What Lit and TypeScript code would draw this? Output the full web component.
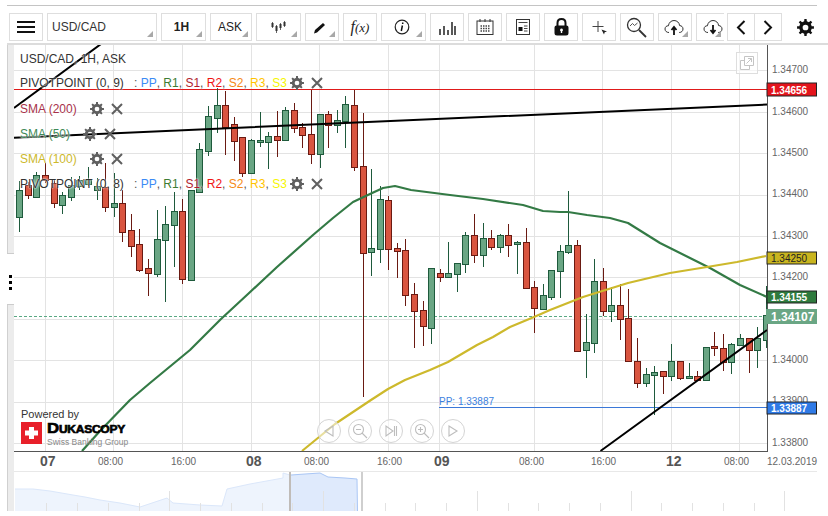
import { LitElement, html, css, svg } from "lit";
import { customElement } from "lit/decorators.js";

type C = [string, number, number, number, number];
// kind, bodyTop, bodyBottom, wickTop, wickBottom
const CANDLES: C[] = [
  ["g",190,217,181,232],["r",185,195,182,199],["g",175,197,172,198],["r",175,180,163,183],["r",183,203,180,208],
  ["g",195,205,192,214],["g",185,197,177,201],["g",180,186,176,190],["g",180,184,167,186],["g",186,190,178,200],
  ["r",187,207,163,212],["g",203,207,173,217],["r",203,232,190,242],["r",230,246,214,257],["r",244,270,229,272],
  ["r",268,273,259,296],["g",239,274,210,277],["g",224,240,206,302],["g",211,225,192,267],["r",211,279,199,284],
  ["g",190,280,190,281],["g",149,192,143,192],["g",116,151,106,156],["g",105,118,88,133],["r",105,127,91,155],
  ["r",124,141,117,161],["r",137,173,137,177],["g",140,173,139,173],["g",140,142,112,147],["g",136,142,132,169],
  ["r",136,140,111,157],["g",110,140,107,140],["r",110,128,103,133],["r",127,135,123,148],["r",134,154,90,164],
  ["g",114,154,114,168],["r",114,125,111,148],["g",120,125,110,133],["g",104,121,96,148],["r",105,167,90,171],
  ["r",166,253,113,397],["g",248,252,169,276],["g",199,249,186,263],["r",200,249,196,270],["r",248,251,243,278],
  ["r",250,295,239,306],["r",294,311,283,348],["r",310,326,301,346],["g",268,328,268,344],["r",273,277,269,282],
  ["g",273,277,242,278],["g",263,274,263,292],["g",235,264,232,273],["r",235,255,214,263],["g",238,255,223,267],
  ["r",238,247,230,250],["g",235,247,234,253],["r",235,245,224,257],["g",242,244,241,274],["r",242,288,228,288],
  ["r",287,308,281,333],["g",295,309,284,309],["g",270,297,270,300],["g",251,271,245,298],["g",245,252,191,254],
  ["r",245,351,240,352],["g",342,350,314,378],["g",281,343,259,353],["r",281,311,268,316],["g",305,311,287,322],
  ["r",305,319,284,340],["r",318,361,289,361],["r",361,383,338,388],["g",374,383,368,387],["g",372,375,366,415],
  ["r",371,376,371,394],["g",361,376,344,381],["r",361,378,361,380],["g",376,378,363,379],["r",376,380,371,380],
  ["g",347,380,347,380],["r",346,348,332,356],["r",348,362,334,371],["g",344,362,343,374],["g",338,345,334,345],
  ["r",338,350,338,373],["g",338,350,327,368],["g",315,340,286,348],
];

const GRID_Y = [70,112,153,195,236,277,319,360,402,443];
const GRID_X = [45,113,182,251,319,388,439,534,602,671,739];
const PRICES: [string, number][] = [
  ["1.34700",73],["1.34600",115],["1.34500",156],["1.34400",197],["1.34300",239],["1.34200",280],["1.34000",363],["1.33900",404],["1.33800",446],
];
const SMA50 = "82,451 100,431 130,400 150,383 190,350 221,319 248,294 277,267 313,235 333,218 353,202 370,194 383,188 395,186 411,190 450,195 483,199 523,205 543,211 560,212 568,212 587,215 610,218 628,223 660,243 690,258 710,268 740,285 767,297";
const SMA100 = "302,451 335,424 371,400 388,389 405,380 430,370 448,362 477,345 493,337 510,327 534,317 550,310 583,297 628,283 670,273 707,267 737,262 766,256";
const NAV_AREA = "15,511 15,489 33,489 50,491 73,495 85,497 100,500 120,503 140,507 155,502 167,498 173,503 200,505 222,506 227,489 250,484 283,478 283,473 290,475 290,511";

const TAGS: [string, number, number, string, string, string, string][] = [
  ["1.34656",83,13,"#e4141c","#222","#fff","bold 10px"],
  ["1.34250",252,12,"#c9b51f","#222","#222","10px"],
  ["1.34155",291,12,"#2f7a3e","#222","#fff","bold 10px"],
  ["1.33887",402,12,"#2f7ae6","#222","#fff","bold 10px"],
];

function gearPath(cx: number, cy: number, R: number, r: number, hole: number, teeth = 8) {
  let d = "";
  const step = (Math.PI * 2) / teeth;
  for (let i = 0; i < teeth; i++) {
    const a = i * step;
    const pts: [number, number][] = [
      [r, a - step * 0.5], [r, a - step * 0.27], [R, a - step * 0.17], [R, a + step * 0.17], [r, a + step * 0.27],
    ];
    pts.forEach(([rad, t], j) => {
      d += `${i === 0 && j === 0 ? "M" : "L"}${(cx + rad * Math.cos(t)).toFixed(2)} ${(cy + rad * Math.sin(t)).toFixed(2)}`;
    });
  }
  d += "Z";
  d += `M${cx + hole} ${cy}A${hole} ${hole} 0 1 0 ${cx - hole} ${cy}A${hole} ${hole} 0 1 0 ${cx + hole} ${cy}Z`;
  return d;
}

const gearIcon = (cls: string, s: number) => html`<svg class=${cls} width=${s} height=${s} viewBox="0 0 16 16"><path fill-rule="evenodd" d=${gearPath(8, 8, 8, 5.9, 2.7)}/></svg>`;
const closeIcon = html`<svg class="x" width="12" height="12" viewBox="0 0 12 12"><path d="M1 1L11 11M11 1L1 11"/></svg>`;

@customElement("app-root")
export class AppRoot extends LitElement {
  static styles = css`
    :host { display: block; width: 828px; height: 516px; background: #fff; overflow: hidden; font-family: "Liberation Sans", Arial, sans-serif; color: #333; }
    .rule { height: 1px; margin: 5px 11px 0 7px; background: #c4c4c4; }
    .toolbar { display: flex; gap: 4px; height: 28px; margin-top: 7px; padding-left: 9px; align-items: stretch; }
    .btn { position: relative; box-sizing: border-box; width: 34px; border: 1px solid #dedede; display: flex; align-items: center; justify-content: center; font-size: 12px; color: #222; }
    .btn svg { display: block; }
    .btn.sym { width: 110px; justify-content: flex-start; padding-left: 4px; font-size: 12px; color: #333; }
    .btn.w45 { width: 45px; }
    .btn.w42 { width: 42px; }
    .btn.tf { font-weight: bold; color: #222; padding-right: 4px; }
    .btn.ask { padding-right: 2px; }
    .btn.clip { width: 28px; border-right: none; justify-content: flex-start; padding-left: 6px; }
    .btn.nav { width: 55px; margin-left: -1px; padding: 0; }
    .btn.nav > div { flex: 1; height: 100%; display: flex; align-items: center; justify-content: center; }
    .btn.nav > div + div { border-left: 1px solid #dedede; }
    .settings { width: 38px; display: flex; align-items: center; justify-content: center; }
    .corner { position: absolute; right: 3px; bottom: 3px; width: 0; height: 0; border-left: 6px solid transparent; border-bottom: 6px solid #a8a8a8; }
    .fx { font-family: "Liberation Serif", serif; font-style: italic; font-size: 13px; color: #222; }
    .fx b { font-size: 16px; font-weight: normal; }
    .sep { height: 2px; margin: 2px 0 0 7px; background: #dcdcdc; }
    .main { display: flex; margin-left: 7px; height: 466px; }
    .gutter { box-sizing: border-box; width: 7px; background: #ececec; border-left: 1px solid #d0d0d0; display: flex; flex-direction: column; padding-top: 208px; }
    .grip { box-sizing: content-box; height: 44px; padding-top: 6px; margin-left: -1px; background: #fff; border-top: 1px solid #ccc; border-bottom: 1px solid #ccc; display: flex; flex-direction: column; align-items: center; justify-content: center; gap: 3px; }
    .grip i { display: block; width: 3px; height: 3px; background: #000; }
    .chart { position: relative; width: 806px; }
    .chart > svg { display: block; }
    .legend { position: absolute; left: 6px; top: 2px; display: flex; flex-direction: column; font-size: 12px; white-space: nowrap; }
    .row { height: 25px; display: flex; align-items: center; text-shadow: 0 0 2px #fff, 0 0 2px #fff; }
    .row.title { height: 24px; color: #333; margin-bottom: -1px; }
    .row.first { height: 26px; }
    .pivot .name { color: #333; width: 114px; }
    .pivot .gear { margin-left: 3px; }
    .sma .gear { margin-left: 13px; }
    .gear { fill: #5f5f5f; flex: none; }
    .x { margin-left: 7px; flex: none; fill: none; stroke: #5f5f5f; stroke-width: 2; }
    .pp { color: #3b8bf5; } .r1 { color: #3d7d33; } .s1 { color: #b01e2e; } .r2 { color: #f01414; }
    .s2 { color: #f58a16; } .r3 { color: #ffc400; } .s3 { color: #f6f600; } .cm { color: #555; }
    .s200 { color: #a8324a; } .s50 { color: #3f8a58; } .s100 { color: #cdb92c; }
    .expand { position: absolute; left: 722px; top: 7px; width: 22px; height: 22px; box-sizing: border-box; border: 1px solid #dedede; display: flex; align-items: center; justify-content: center; background: rgba(255,255,255,.6); }
    .brand { position: absolute; left: 7px; top: 362px; }
    .brand .pw { font-size: 11px; color: #333; line-height: 14px; }
    .brand .lg { display: flex; gap: 5px; margin-top: 1px; }
    .brand .nm { font-weight: bold; font-variant: small-caps; font-size: 14px; letter-spacing: -.2px; line-height: 13px; color: #000; -webkit-text-stroke: .6px #000; transform-origin: 0 0; transform: scaleX(1.2); }
    .brand .sub { font-size: 8.5px; color: #8a8a8a; line-height: 10px; margin-top: 2px; white-space: nowrap; }
    .zoom { position: absolute; left: 303px; top: 374px; display: flex; gap: 7px; }
    .zb { box-sizing: border-box; width: 24px; height: 24px; border: 1px solid #d4d4d4; border-radius: 50%; background: rgba(255,255,255,.55); display: flex; align-items: center; justify-content: center; }
    .zb svg { fill: none; stroke: #bdbdbd; stroke-width: 1.1; }
    .pl { font-size: 10px; fill: #666; }
    .tm { font-size: 10px; fill: #666; }
    .dy { font-size: 14px; font-weight: bold; fill: #555; }
    .pptext { font-size: 10px; fill: #3b7fe0; }
  `;

  private candles() {
    return CANDLES.map((c, i) => {
      const x = Math.round(19.3 + 8.58 * i);
      const [k, t, b, wt, wb] = c;
      const stroke = k === "g" ? "#1e5a3c" : "#6a1a12";
      const fill = k === "g" ? "#6aa684" : "#d95540";
      return svg`<path d="M${x + 0.5} ${wt}V${wb}" stroke=${stroke} fill="none"/><rect x=${x - 2.5} y=${t + 0.5} width="6" height=${Math.max(b - t, 1)} fill=${fill} stroke=${stroke}/>`;
    });
  }

  private navTicks() {
    const out = [];
    for (let k = 1; k < 26; k++) {
      const x = Math.round(15.7 + 30.75 * k);
      const tall = (k - 5) % 5 === 0;
      out.push(svg`<path d="M${x + 0.5} ${tall ? 491 : 503}V511" stroke="#e2e2e2" fill="none"/>`);
    }
    return out;
  }

  private pivot(name: string, first = false) {
    return html`<div class="row pivot ${first ? "first" : ""}"><span class="name">${name}</span>
      <span class="cm">:&nbsp;</span><span class="pp">PP</span><span class="cm">,&nbsp;</span><span class="r1">R1</span><span class="cm">,&nbsp;</span><span class="s1">S1</span><span class="cm">,&nbsp;</span><span class="r2">R2</span><span class="cm">,&nbsp;</span><span class="s2">S2</span><span class="cm">,&nbsp;</span><span class="r3">R3</span><span class="cm">,&nbsp;</span><span class="s3">S3</span>
      ${gearIcon("gear", 14)}${closeIcon}</div>`;
  }

  render() {
    const cloud = "M5 14.5C2.6 14.5 1 13 1 11C1 9 2.6 7.6 4.4 7.8C4.8 4.6 7.2 2.5 10 2.5C13 2.5 15.4 4.7 15.6 7.6C17.6 7.6 19 9 19 11C19 13 17.4 14.5 15.2 14.5";
    return html`
      <div class="rule"></div>
      <div class="toolbar">
        <div class="btn"><svg width="18" height="14" viewBox="0 0 18 14"><path d="M0 2H18M0 7H18M0 12H18" stroke="#111" stroke-width="2"/></svg></div>
        <div class="btn sym">USD/CAD<span class="corner"></span></div>
        <div class="btn w45 tf">1H<span class="corner"></span></div>
        <div class="btn w42 ask">ASK<span class="corner"></span></div>
        <div class="btn w45"><svg width="16" height="14" viewBox="0 0 16 14"><path d="M1.5 2V8M5.5 5V13M9.5 3V10M13.5 1V7" stroke="#666" stroke-width="1"/><path d="M1.5 3V7M5.5 6V11M9.5 4V8M13.5 2V6" stroke="#333" stroke-width="2"/></svg><span class="corner"></span></div>
        <div class="btn"><svg width="14" height="14" viewBox="0 0 14 14" style="margin:2px 4px 0 0"><path d="M1 12.5L2 9L10 2L12 4L4 11.5Z" fill="#111"/></svg><span class="corner"></span></div>
        <div class="btn"><span class="fx"><b>f</b>(x)</span></div>
        <div class="btn w45"><svg width="16" height="16" viewBox="0 0 16 16" style="margin-right:4px"><circle cx="8" cy="8" r="6.8" fill="none" stroke="#222" stroke-width="1.2"/><path d="M8.7 3.5v1.6M8.4 6.5L7.3 12" stroke="#111" stroke-width="1.5" fill="none"/></svg><span class="corner"></span></div>
        <div class="btn"><svg width="18" height="15" viewBox="0 0 18 15"><path d="M2 15V9M6 15V6M10 15V10M14 15V2M17 15V6" stroke="#222" stroke-width="1.5"/></svg></div>
        <div class="btn"><svg width="18" height="16" viewBox="0 0 18 16"><rect x="1" y="2" width="16" height="13.5" fill="none" stroke="#333"/><path d="M4 0V3M9 0V3M14 0V3" stroke="#333"/><path d="M4.5 7H13.5M4.5 9.5H13.5M4.5 12H13.5" stroke="#444" stroke-width="1.5" stroke-dasharray="1.5 1"/></svg></div>
        <div class="btn"><svg width="14" height="16" viewBox="0 0 14 16"><rect x=".5" y=".5" width="13" height="15" fill="none" stroke="#333"/><path d="M2.5 3.5H11.5M8 7H11.5M8 9.5H11.5M8 12H11.5" stroke="#444"/><rect x="2.5" y="8" width="4" height="4" fill="#111"/></svg></div>
        <div class="btn"><svg width="15" height="18" viewBox="0 0 15 18"><path d="M3.5 8V5C3.5 2.5 5.2 1 7.5 1C9.8 1 11.5 2.5 11.5 5V8" fill="none" stroke="#111" stroke-width="2"/><path fill-rule="evenodd" d="M2.5 7.5H12.5A2 2 0 0 1 14.5 9.5V15A2.5 2.5 0 0 1 12 17.5H3A2.5 2.5 0 0 1 .5 15V9.5A2 2 0 0 1 2.5 7.5ZM7.5 10.5A1.5 1.5 0 0 0 6.8 13.3V15H8.2V13.3A1.5 1.5 0 0 0 7.5 10.5Z" fill="#111"/></svg></div>
        <div class="btn"><svg width="18" height="18" viewBox="0 0 18 18"><path d="M8 3V14M2.5 8.5H13.5" stroke="#444" stroke-width="1"/><path d="M11.5 11.5L17 13.5L14.7 14.3L14 16.5Z" fill="#222"/></svg></div>
        <div class="btn"><svg width="22" height="22" viewBox="0 0 22 22" style="margin-top:1px"><circle cx="8" cy="8" r="6.5" fill="none" stroke="#333" stroke-width="1.3"/><path d="M13 13L20 20" stroke="#333" stroke-width="1.8"/><path d="M4 9L6.5 6.5L8.5 8.5L11.5 6" fill="none" stroke="#555"/></svg></div>
        <div class="btn"><svg width="20" height="18" viewBox="0 0 20 18" style="margin-right:3px"><path d=${cloud} fill="none" stroke="#333" stroke-width="1"/><path d="M10 17V10M7.5 12L10 9L12.5 12" fill="none" stroke="#111" stroke-width="1.8"/></svg><span class="corner"></span></div>
        <div class="btn clip"><svg width="20" height="18" viewBox="0 0 20 18"><path d=${cloud} fill="none" stroke="#333" stroke-width="1"/><path d="M10 7V14M7.5 12L10 15L12.5 12" fill="none" stroke="#111" stroke-width="1.8"/></svg><span class="corner"></span></div>
        <div class="btn nav">
          <div><svg width="10" height="15" viewBox="0 0 10 15"><path d="M8.5 1L2 7.5L8.5 14" fill="none" stroke="#111" stroke-width="2"/></svg></div>
          <div><svg width="10" height="15" viewBox="0 0 10 15"><path d="M1.5 1L8 7.5L1.5 14" fill="none" stroke="#111" stroke-width="2"/></svg></div>
        </div>
        <div class="settings"><svg width="17" height="17" viewBox="0 0 16 16"><path fill-rule="evenodd" fill="#111" d=${gearPath(8, 8, 8, 5.9, 2.7)}/></svg></div>
      </div>
      <div class="sep"></div>
      <div class="main">
        <div class="gutter"><div class="grip"><i></i><i></i><i></i></div></div>
        <div class="chart">
          <svg width="806" height="426" viewBox="14 45 806 426">
            ${GRID_Y.map((y) => svg`<path d="M14 ${y + 0.5}H767" stroke="#e3e3e3"/>`)}
            ${GRID_X.map((x) => svg`<path d="M${x + 0.5} 45V451" stroke="#e3e3e3"/>`)}
            <path d="M14 89.5H767" stroke="#e01a1a"/>
            <path d="M439 407.5H767" stroke="#3b78d8"/>
            <text class="pptext" x="439" y="405">PP: 1.33887</text>
            <path d="M14 316.5H767" stroke="#5aa883" stroke-dasharray="3 2"/>
            ${this.candles()}
            <polyline points=${SMA50} fill="none" stroke="#337a45" stroke-width="2.2" stroke-linejoin="round"/>
            <polyline points=${SMA100} fill="none" stroke="#cdb92c" stroke-width="2.2" stroke-linejoin="round"/>
            <path d="M14 108L101 44M14 137.7L767 104.5M600.5 451L767 330" stroke="#000" stroke-width="2" fill="none"/>
            <rect x="768" y="45" width="52" height="406" fill="#fff"/>
            ${PRICES.map(([p, y]) => svg`<text class="pl" x="772" y=${y}>${p}</text>`)}
            <path d="M14 451.5H767M767.5 45V452" stroke="#555"/>
            ${TAGS.map(([t, y, h, bg, bd, fg, f]) => svg`<rect x="767" y=${y} width="49.5" height=${h} fill=${bg} stroke=${bd}/><text x="771" y=${y + h - 2.5} fill=${fg} style="font:${f} 'Liberation Sans',sans-serif">${t}</text>`)}
            <rect x="766" y="309" width="51" height="15" fill="#6aa684"/>
            <text x="771" y="321" fill="#fff" style="font:bold 12px 'Liberation Sans',sans-serif">1.34107</text>
            <text class="dy" x="40" y="466">07</text>
            <text class="tm" x="98" y="465">08:00</text>
            <text class="tm" x="171" y="465">16:00</text>
            <text class="dy" x="246" y="466">08</text>
            <text class="tm" x="304" y="465">08:00</text>
            <text class="tm" x="377" y="465">16:00</text>
            <text class="dy" x="434" y="466">09</text>
            <text class="tm" x="519" y="465">08:00</text>
            <text class="tm" x="591" y="465">16:00</text>
            <text class="dy" x="666" y="466">12</text>
            <text class="tm" x="724" y="465">08:00</text>
            <text class="tm" x="767" y="465">12.03.2019</text>
          </svg>
          <svg width="806" height="40" viewBox="14 471 806 40">
            <path d="M14 471.5H817" stroke="#e8e8e8"/>
            <polygon points=${NAV_AREA} fill="#eef4fd"/>
            <polyline points="15,489 33,489 50,491 73,495 85,497 100,500 120,503 140,507 155,502 167,498 173,503 200,505 222,506 227,489 250,484 283,478 283,473 290,475" fill="none" stroke="#dbe7fa"/>
            <polygon points="291,511 291,475 305,474 320,473 328,477 345,478 357,479 357,511" fill="#dfeafc"/>
            ${this.navTicks()}
            <polyline points="291,475 305,474 320,473 328,477 345,478 357,479 357.5,511" fill="none" stroke="#a9c6f5"/>
            <rect x="289" y="472" width="2" height="39" fill="#c0bcb8"/>
            <rect x="361" y="472" width="2" height="39" fill="#cfcfcf"/>
          </svg>
          <div class="legend">
            <div class="row title">USD/CAD, 1H, ASK</div>
            ${this.pivot("PIVOTPOINT (0, 9)", true)}
            <div class="row sma s200">SMA (200)${gearIcon("gear", 14)}${closeIcon}</div>
            <div class="row sma s50">SMA (50)${gearIcon("gear", 14)}${closeIcon}</div>
            <div class="row sma s100">SMA (100)${gearIcon("gear", 14)}${closeIcon}</div>
            ${this.pivot("PIVOTPOINT (0, 8)")}
          </div>
          <div class="expand"><svg width="16" height="16" viewBox="0 0 16 16" fill="none" stroke="#c4c4c4"><path d="M5.5 1.5H14.5V10.5H5.5Z"/><path d="M1.5 5.5H5.5M1.5 5.5V14.5H10.5V10.5"/><path d="M7.5 8.5L12.5 3.5M9 3.5H12.5V7"/></svg></div>
          <div class="brand">
            <div class="pw">Powered by</div>
            <div class="lg">
              <svg width="21" height="22" viewBox="0 0 21 22"><rect width="21" height="22" fill="#e8202a"/><path d="M8 5H13V8.5H17V13.5H13V17H8V13.5H4V8.5H8Z" fill="#fff"/></svg>
              <div><div class="nm">Dukascopy</div><div class="sub">Swiss Banking Group</div></div>
            </div>
          </div>
          <div class="zoom">
            <div class="zb"><svg width="14" height="14" viewBox="0 0 14 14"><path d="M11 2V12L3 7Z"/></svg></div>
            <div class="zb"><svg width="16" height="16" viewBox="0 0 16 16"><circle cx="6.5" cy="6.5" r="5"/><path d="M10 10L15 15M4 6.5H9"/></svg></div>
            <div class="zb"><svg width="14" height="14" viewBox="0 0 14 14"><path d="M2 2V12L9 7ZM10.5 2V12M12.5 2V12"/></svg></div>
            <div class="zb"><svg width="16" height="16" viewBox="0 0 16 16"><circle cx="6.5" cy="6.5" r="5"/><path d="M10 10L15 15M4 6.5H9M6.5 4V9"/></svg></div>
            <div class="zb"><svg width="14" height="14" viewBox="0 0 14 14"><path d="M3 2V12L11 7Z"/></svg></div>
          </div>
        </div>
      </div>
    `;
  }
}
